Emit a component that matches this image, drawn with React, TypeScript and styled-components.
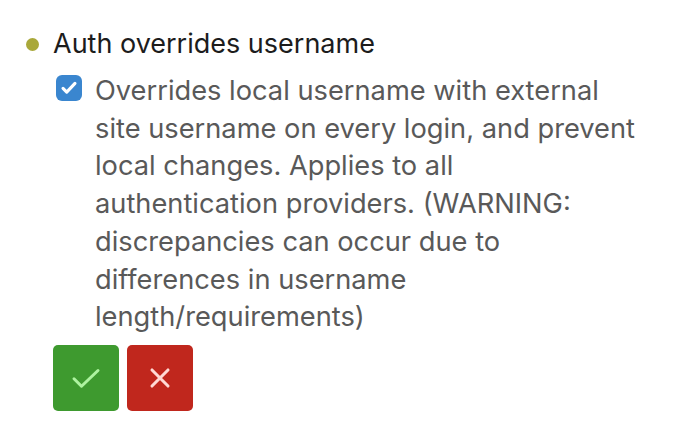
import React from 'react';
import styled, { createGlobalStyle } from 'styled-components';

const GlobalStyle = createGlobalStyle`
  html, body {
    margin: 0;
    padding: 0;
    background: #ffffff;
  }
  body {
    font-family: Inter, "Noto Sans", sans-serif;
  }
`;

const Page = styled.div`
  padding: 24px 0 0 26px;
`;

const SettingTitle = styled.div`
  display: flex;
  align-items: center;
  gap: 14px;
  font-size: 27px;
  line-height: 40px;
  color: #1c1c1c;
`;

const Bullet = styled.span`
  width: 13px;
  height: 13px;
  border-radius: 50%;
  background: #a9a83a;
  flex: none;
`;

const Body = styled.div`
  padding-left: 27px;
  margin-top: 8px;
`;

const CheckRow = styled.label`
  display: flex;
  align-items: flex-start;
  gap: 13px;
  padding-left: 3px;
`;

const Box = styled.span`
  width: 26px;
  height: 26px;
  margin-top: 3px;
  border-radius: 6px;
  background: #3a86cf;
  display: flex;
  align-items: center;
  justify-content: center;
  flex: none;
`;

const Description = styled.div`
  width: 548px;
  font-size: 27.25px;
  line-height: 37.7px;
  color: #595959;
`;

const Actions = styled.div`
  display: flex;
  gap: 8px;
  margin-top: 9px;
`;

const ActionButton = styled.button<{ $tone: 'ok' | 'cancel' }>`
  width: 66px;
  height: 66px;
  border: none;
  border-radius: 5px;
  padding: 0;
  display: flex;
  align-items: center;
  justify-content: center;
  background: ${(p) => (p.$tone === 'ok' ? '#3e9a2f' : '#c0271d')};
  color: ${(p) => (p.$tone === 'ok' ? '#aef3a0' : '#ffd9d4')};
`;

export default function App() {
  return (
    <Page>
      <GlobalStyle />
      <SettingTitle>
        <Bullet />
        Auth overrides username
      </SettingTitle>
      <Body>
        <CheckRow>
          <Box>
            <svg width="22" height="22" viewBox="0 0 24 24" fill="none" stroke="#fff" strokeWidth="3.4" strokeLinecap="round" strokeLinejoin="round">
              <path d="M5.5 12.5l4 4L18.5 7" />
            </svg>
          </Box>
          <Description>
            Overrides local username with external site username on every login, and prevent
            local changes. Applies to all authentication providers. (WARNING: discrepancies can
            occur due to differences in username length/requirements)
          </Description>
        </CheckRow>
        <Actions>
          <ActionButton $tone="ok">
            <svg width="36" height="36" viewBox="0 0 24 24" fill="none" stroke="currentColor" strokeWidth="2" strokeLinecap="round" strokeLinejoin="round">
              <path d="M4 12.5l5 5L20 7" />
            </svg>
          </ActionButton>
          <ActionButton $tone="cancel">
            <svg width="32" height="32" viewBox="0 0 24 24" fill="none" stroke="currentColor" strokeWidth="2.3" strokeLinecap="round">
              <path d="M6 6l12 12M18 6L6 18" />
            </svg>
          </ActionButton>
        </Actions>
      </Body>
    </Page>
  );
}
